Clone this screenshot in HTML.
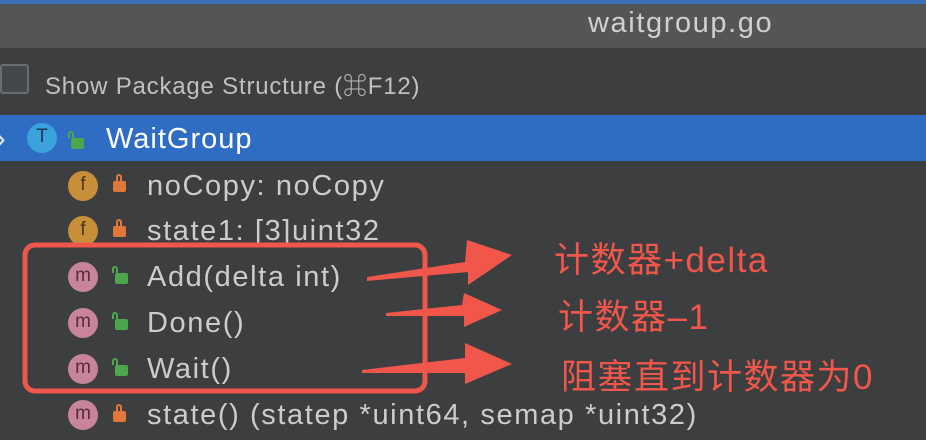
<!DOCTYPE html>
<html><head><meta charset="utf-8"><style>
body{margin:0;width:926px;height:440px;overflow:hidden;background:#3c3e40;font-family:"Liberation Sans","Noto Sans CJK SC",sans-serif;position:relative}
.top{position:absolute;left:0;top:0;width:926px;height:4px;background:#3d6fb8}
.hdr{position:absolute;left:0;top:4px;width:926px;height:44px;background:#535557}
.hdr span{position:absolute;left:588px;top:3px;font-size:29px;letter-spacing:1.6px;color:#d0d0d0}
.t{position:absolute;color:#cccccc;font-size:29px;letter-spacing:1.6px;white-space:nowrap}
.sel{position:absolute;left:0;top:115px;width:926px;height:46px;background:#2f6dc5}
.ic{position:absolute;width:30px;height:30px;border-radius:50%;font-size:19px;text-align:center;line-height:28px}
.f{background:#c78f3a;color:#4a3510}
.m{background:#c7849c;color:#5a2c3a}
.lk{position:absolute;width:13px;height:11px;border-radius:2px}
.lk:before{content:"";position:absolute;left:1px;top:-7px;width:6px;height:7px;border:2px solid;border-bottom:none;border-radius:4px 4px 0 0;box-sizing:border-box}
.o{background:#e0783a}.o:before{border-color:#e0783a;left:3px}
.g{background:#4ca64c}.g:before{border-color:#4ca64c;left:-3px}
.r{position:absolute;color:#f0574a;font-size:35px;letter-spacing:1.5px;white-space:nowrap}
</style></head><body>
<div class="top"></div>
<div class="hdr"><span>waitgroup.go</span></div>
<div style="position:absolute;left:0;top:64px;width:29px;height:30px;border:2px solid #6a6c6e;border-radius:3px;background:#45484a;box-sizing:border-box"></div>
<div class="t" style="left:45px;top:66px;font-size:24px;letter-spacing:0.8px;color:#c0c0c0">Show Package Structure (⌘F12)</div>
<div class="sel"></div>
<div class="t" style="left:-4px;top:123px;color:#dfe8f5">›</div>
<div class="ic" style="left:27px;top:123px;background:#3aa3dc;color:#1a3a55">T</div>
<div class="lk g" style="left:71px;top:138px"></div>
<div class="t" style="left:106px;top:123px;font-size:29px;letter-spacing:1px;color:#fff">WaitGroup</div>

<div class="ic f" style="left:68px;top:171px">f</div><div class="lk o" style="left:113px;top:181px"></div>
<div class="t" style="left:147px;top:170px">noCopy: noCopy</div>
<div class="ic f" style="left:68px;top:216px">f</div><div class="lk o" style="left:113px;top:226px"></div>
<div class="t" style="left:147px;top:215px">state1: [3]uint32</div>
<div class="ic m" style="left:68px;top:262px">m</div><div class="lk g" style="left:115px;top:273px"></div>
<div class="t" style="left:147px;top:261px">Add(delta int)</div>
<div class="ic m" style="left:68px;top:308px">m</div><div class="lk g" style="left:115px;top:319px"></div>
<div class="t" style="left:147px;top:307px">Done()</div>
<div class="ic m" style="left:68px;top:354px">m</div><div class="lk g" style="left:115px;top:365px"></div>
<div class="t" style="left:147px;top:353px">Wait()</div>
<div class="ic m" style="left:68px;top:400px">m</div><div class="lk o" style="left:113px;top:411px"></div>
<div class="t" style="left:147px;top:399px">state() (statep *uint64, semap *uint32)</div>

<svg style="position:absolute;left:0;top:0" width="926" height="440">
<rect x="25" y="245" width="400" height="146" rx="10" fill="none" stroke="#f0574a" stroke-width="5"/>
<g fill="#f0574a">
<polygon points="367,277 465,262 467,240 512,255 468,285 468,272 367,281"/>
<polygon points="386,313 462,305 464,293 502,310 464,327 464,316 386,316"/>
<polygon points="362,370 465,358 465,343 512,364 465,384 465,373 362,373"/>
</g>
</svg>
<div class="r" style="left:554px;top:232px">计数器+delta</div>
<div class="r" style="left:558px;top:289px">计数器–1</div>
<div class="r" style="left:561px;top:349px">阻塞直到计数器为0</div>
</body></html>
